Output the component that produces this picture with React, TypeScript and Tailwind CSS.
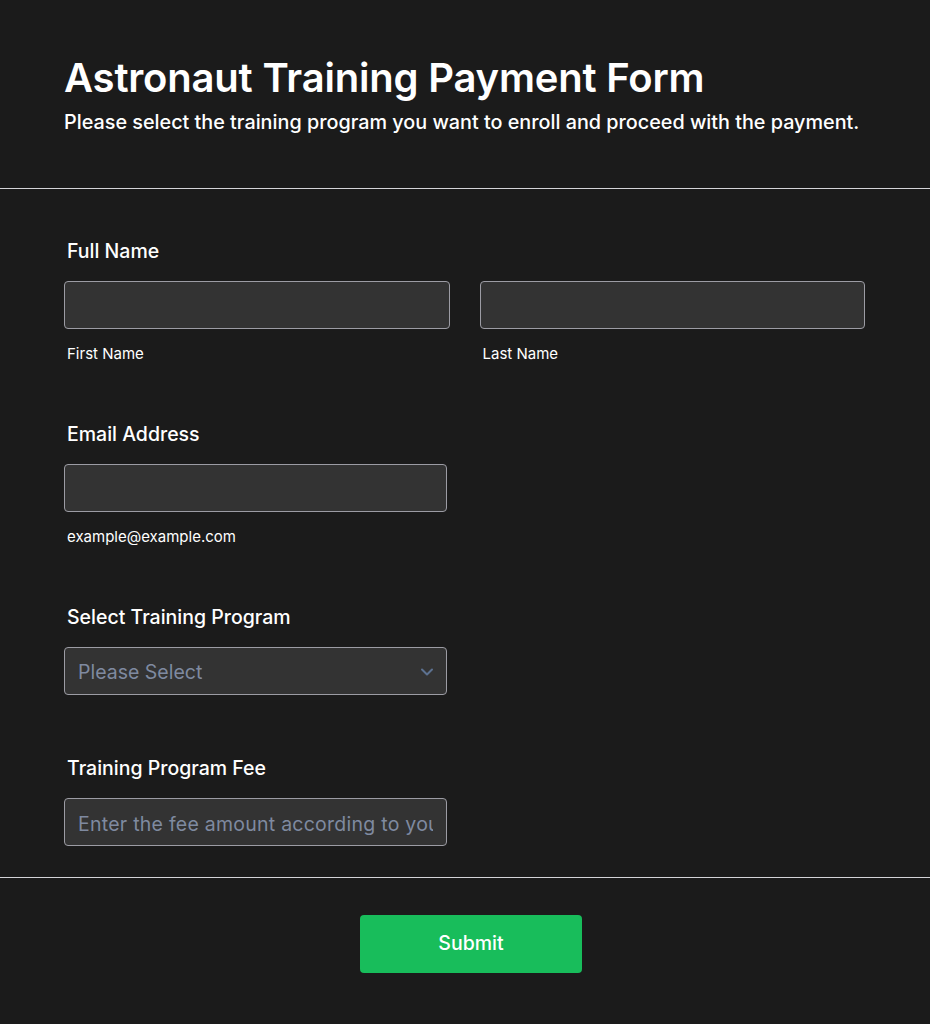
import React from "react";

const font = { fontFamily: "Inter, 'Noto Sans', sans-serif" };

function Label({ children }: { children: React.ReactNode }) {
  return <div className="ml-[3px] text-[19.5px] leading-[28px] font-medium text-white">{children}</div>;
}

function Sub({ children }: { children: React.ReactNode }) {
  return <div className="ml-[3px] mt-[15px] text-[15px] leading-[20px] text-white">{children}</div>;
}

const boxCls =
  "block h-[48px] rounded-[4px] border border-[#9c9ca4] bg-[#333333] outline-none text-[19.5px] text-white placeholder:text-[#7f8aa0]";

export default function App() {
  return (
    <div className="min-h-[1024px] w-full bg-[#1b1b1b] text-white" style={font}>
      <div className="px-16 pt-[54px] pb-[52px]">
        <h1 className="text-[40px] leading-[48px] font-semibold tracking-[-0.2px]">Astronaut Training Payment Form</h1>
        <p className="mt-[6px] whitespace-nowrap text-[19.8px] leading-[28px] font-medium">
          Please select the training program you want to enroll and proceed with the payment.
        </p>
      </div>
      <div className="h-px bg-[#d4d4d8]" />
      <div className="px-16 pt-[48px] pb-[31px]">
        <Label>Full Name</Label>
        <div className="mt-[16px] grid grid-cols-2 gap-[30px] w-[801px]">
          <div>
            <input className={boxCls + " w-full px-[13px]"} />
            <Sub>First Name</Sub>
          </div>
          <div>
            <input className={boxCls + " w-full px-[13px]"} />
            <Sub>Last Name</Sub>
          </div>
        </div>

        <div className="mt-[56px]">
          <Label>Email Address</Label>
          <input className={boxCls + " mt-[16px] w-[383px] px-[13px]"} />
          <Sub>example@example.com</Sub>
        </div>

        <div className="mt-[56px]">
          <Label>Select Training Program</Label>
          <div className="mt-[16px] flex h-[48px] w-[383px] items-center justify-between rounded-[4px] border border-[#9c9ca4] bg-[#333333] pl-[13px] pr-[12px]">
            <span className="mt-[3px] text-[19.5px] text-[#7f8aa0]">Please Select</span>
            <svg width="14" height="8" viewBox="0 0 14 8" fill="none" stroke="#5c7190" strokeWidth="2" strokeLinecap="round" strokeLinejoin="round" className="mt-[1px]">
              <path d="M2 1.5l5 5 5-5" />
            </svg>
          </div>
        </div>

        <div className="mt-[59px]">
          <Label>Training Program Fee</Label>
          <input
            className={boxCls + " mt-[16px] w-[383px] px-[13px] pt-[4px] tracking-[0.25px]"}
            placeholder="Enter the fee amount according to your selection"
          />
        </div>
      </div>
      <div className="h-px bg-[#d4d4d8]" />
      <div className="flex justify-center pl-[12px] pt-[37px] pb-[50px]">
        <button className="h-[58px] w-[222px] rounded-[4px] bg-[#18bd5b] text-[19.5px] font-medium text-white">
          Submit
        </button>
      </div>
    </div>
  );
}
